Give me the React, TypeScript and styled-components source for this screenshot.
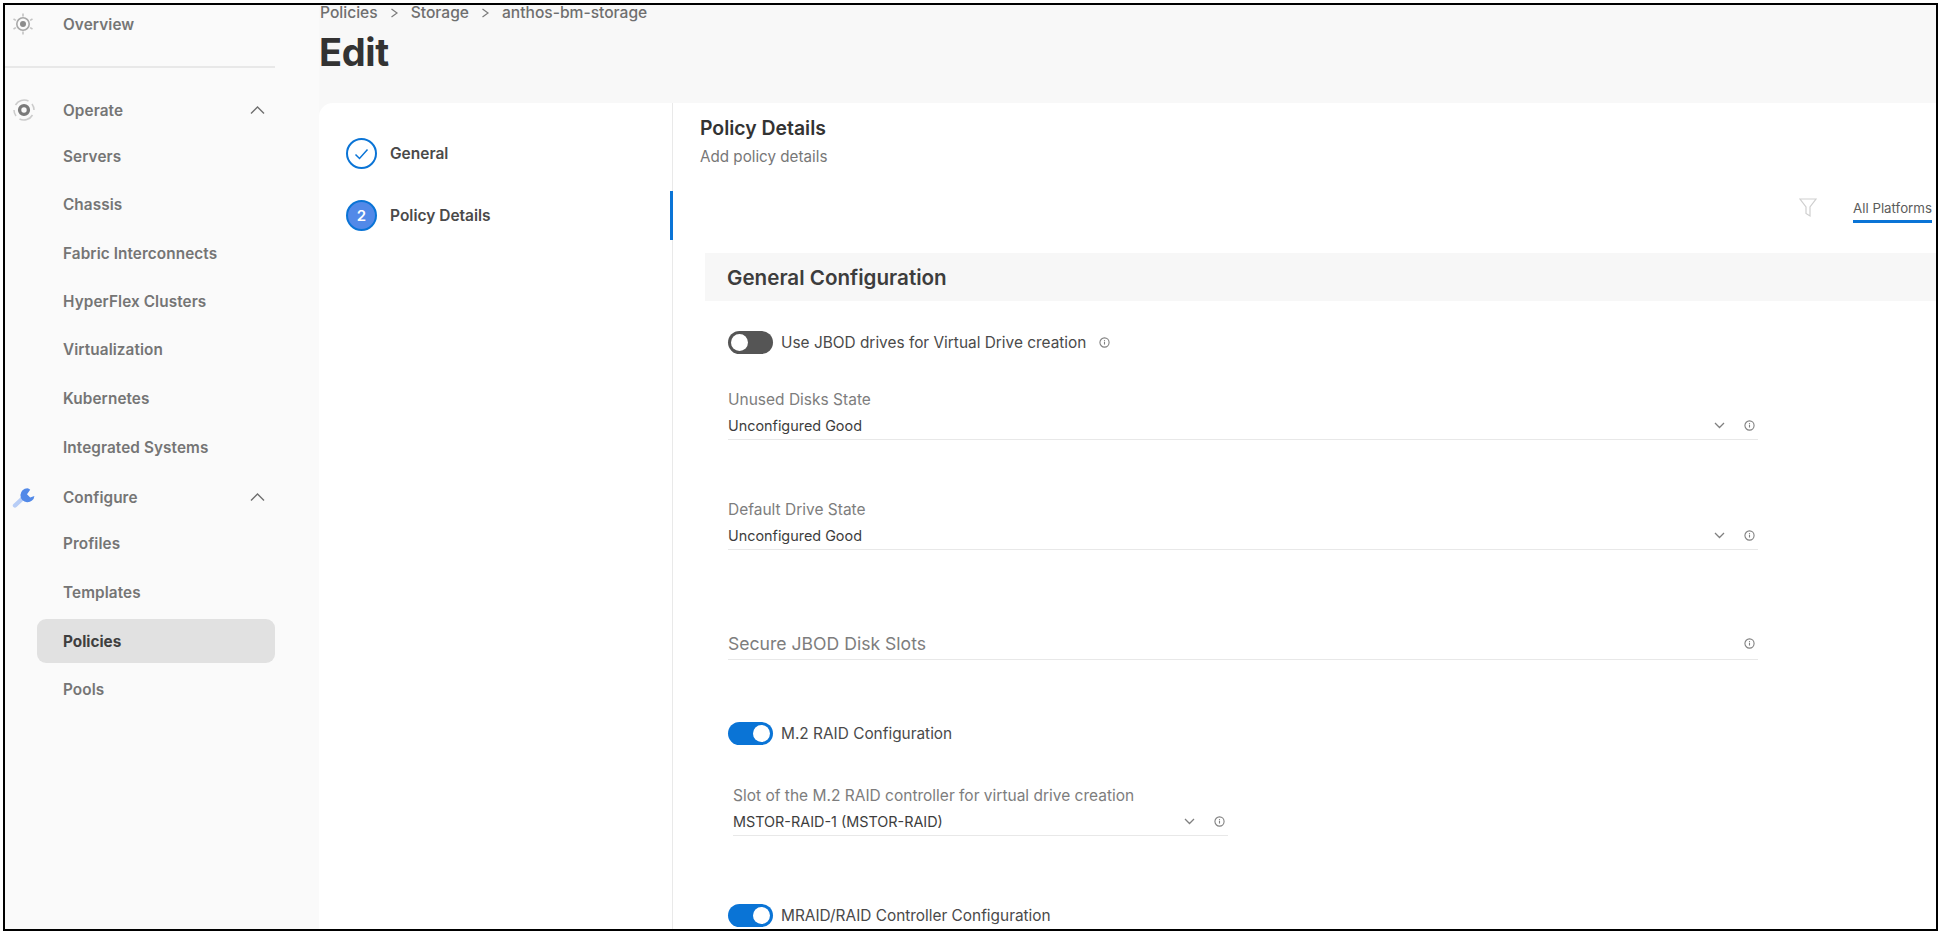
import React from "react";
import styled, { createGlobalStyle } from "styled-components";

const GlobalStyle = createGlobalStyle`
  html, body {
    margin: 0;
    padding: 0;
    background: #ffffff;
    font-family: Inter, "Liberation Sans", sans-serif;
  }
  * {
    box-sizing: border-box;
  }
`;

const Page = styled.div`
  width: 1941px;
  height: 935px;
  padding: 3px 3px 3px 3px;
  overflow: hidden;
`;

const Frame = styled.div`
  display: flex;
  width: 1935px;
  height: 928px;
  border: 2px solid #000000;
  overflow: hidden;
  background: #f8f8f8;
`;

const Sidebar = styled.nav`
  display: flex;
  flex-direction: column;
  flex: 0 0 314px;
  background: #fafafa;
`;

const NavRow = styled.div<{ $height: number; $nudge?: number }>`
  display: flex;
  align-items: center;
  flex: 0 0 ${(p) => p.$height}px;
  padding-left: 58px;
  padding-top: ${(p) => p.$nudge ?? 0}px;
  font-size: 15.3px;
  font-weight: 600;
  letter-spacing: 0.1px;
  color: #757575;
`;

const NavSection = styled(NavRow)`
  position: relative;
`;

const NavIcon = styled.span`
  position: absolute;
  left: 7px;
  top: 50%;
  transform: translateY(-50%);
  display: flex;
`;

const NavChevron = styled.span`
  position: absolute;
  left: 245px;
  top: 50%;
  transform: translateY(-50%);
  display: flex;
`;

const NavDivider = styled.div`
  flex: 0 0 2px;
  width: 270px;
  margin-bottom: 20px;
  background: #e8e8e8;
`;

const ActivePill = styled.div`
  display: flex;
  align-items: center;
  flex: 0 0 44px;
  width: 238px;
  margin: 2px 0 2px 32px;
  padding-left: 26px;
  border-radius: 9px;
  background: #e1e1e1;
  font-size: 15.3px;
  font-weight: 700;
  color: #3f3f3f;
`;

const Main = styled.main`
  display: flex;
  flex-direction: column;
  flex: 1;
  min-width: 0;
`;

const Crumbs = styled.div`
  display: flex;
  align-items: center;
  gap: 12px;
  height: 16px;
  padding-left: 1px;
  font-size: 15.6px;
  font-weight: 500;
  line-height: 16px;
  color: #6f6f6f;
`;

const CrumbSep = styled.span`
  display: flex;
  color: #7c7c7c;
`;

const PageTitle = styled.h1`
  height: 82px;
  margin: 0;
  padding: 9px 0 0 0;
  font-size: 38px;
  font-weight: 700;
  line-height: 44px;
  letter-spacing: -0.4px;
  color: #333333;
`;

const Card = styled.section`
  display: flex;
  flex: 1;
  min-height: 0;
  background: #ffffff;
  border-top-left-radius: 14px;
`;

const StepsPane = styled.div`
  position: relative;
  display: flex;
  flex-direction: column;
  gap: 31px;
  flex: 0 0 354px;
  padding: 35px 0 0 27px;
  border-right: 1px solid #e9e9e9;
`;

const Step = styled.div`
  display: flex;
  align-items: center;
  gap: 13px;
  height: 31px;
  font-size: 15.5px;
  font-weight: 600;
  color: #4a4a4a;
`;

const StepCircle = styled.span<{ $current?: boolean }>`
  display: flex;
  align-items: center;
  justify-content: center;
  width: 31px;
  height: 31px;
  border: 2px solid #0a74d6;
  border-radius: 50%;
  background: ${(p) => (p.$current ? "#5289e8" : "#ffffff")};
  color: #ffffff;
  font-size: 15px;
  font-weight: 600;
`;

const StepMarker = styled.span`
  position: absolute;
  right: -1px;
  top: 88px;
  width: 3px;
  height: 49px;
  background: #0a74d6;
`;

const DetailsPane = styled.div`
  display: flex;
  flex-direction: column;
  flex: 1;
  min-width: 0;
  padding-top: 13px;
`;

const PaneHeader = styled.div`
  padding-left: 27px;
`;

const PaneTitle = styled.div`
  font-size: 19.4px;
  font-weight: 600;
  line-height: 24px;
  color: #333333;
`;

const PaneSub = styled.div`
  margin-top: 7px;
  font-size: 15.2px;
  line-height: 20px;
  color: #777777;
`;

const FilterBar = styled.div`
  display: flex;
  align-items: flex-start;
  justify-content: flex-end;
  height: 86px;
  padding: 29px 4px 0 0;
`;

const FilterIcon = styled.span`
  display: flex;
  margin: 2px 36px 0 0;
`;

const PlatformTab = styled.div`
  height: 27px;
  border-bottom: 3px solid #0a74d6;
  font-size: 13.3px;
  line-height: 20px;
  padding-top: 2px;
  color: #5c5c5c;
`;

const Band = styled.div`
  display: flex;
  align-items: center;
  height: 48px;
  margin-left: 32px;
  padding-left: 22px;
  background: #f7f7f7;
  font-size: 20.6px;
  font-weight: 600;
  color: #3d3d3d;
`;

const Form = styled.div`
  display: flex;
  flex-direction: column;
  padding-left: 55px;
`;

const ToggleRow = styled.div<{ $top: number }>`
  display: flex;
  align-items: center;
  gap: 8px;
  height: 22px;
  margin-top: ${(p) => p.$top}px;
  font-size: 15.4px;
  color: #4a4a4a;
`;

const ToggleTrack = styled.span<{ $on?: boolean }>`
  display: flex;
  justify-content: ${(p) => (p.$on ? "flex-end" : "flex-start")};
  align-items: center;
  width: 45px;
  height: 23px;
  padding: 0 3px;
  border-radius: 12px;
  background: ${(p) => (p.$on ? "#0a74d6" : "#555555")};
`;

const ToggleKnob = styled.span`
  width: 17px;
  height: 17px;
  border-radius: 50%;
  background: #ffffff;
`;

const ToggleInfo = styled.span`
  display: flex;
  margin-left: 5px;
`;

const Field = styled.div<{ $top: number; $width: number; $indent?: number }>`
  width: ${(p) => p.$width}px;
  margin-top: ${(p) => p.$top}px;
  margin-left: ${(p) => p.$indent ?? 0}px;
  border-bottom: 1px solid #e8e8e8;
`;

const FieldLabel = styled.div`
  height: 25px;
  font-size: 15.5px;
  line-height: 24px;
  color: #7d7d7d;
`;

const FieldValue = styled.div`
  display: flex;
  align-items: center;
  height: 26px;
  padding-bottom: 1px;
  font-size: 14.4px;
  color: #3d3d3d;
`;

const PlaceholderValue = styled(FieldValue)`
  height: 29px;
  padding-bottom: 3px;
`;

const FieldText = styled.span`
  flex: 1;
`;

const FieldPlaceholder = styled.span`
  flex: 1;
  font-size: 17.6px;
  color: #7d7d7d;
`;

const FieldIcons = styled.span`
  display: flex;
  align-items: center;
  gap: 19px;
  padding-right: 3px;
`;

const InfoIcon = ({ size = 11 }: { size?: number }) => (
  <svg width={size} height={size} viewBox="0 0 12 12" fill="none">
    <circle cx="6" cy="6" r="5" stroke="#808080" strokeWidth="1.2" />
    <rect x="5.4" y="5.2" width="1.2" height="3" fill="#808080" />
    <rect x="5.4" y="3.4" width="1.2" height="1.1" fill="#808080" />
  </svg>
);

const ChevronDown = () => (
  <svg width="11" height="7" viewBox="0 0 11 7" fill="none">
    <path d="M1 1l4.5 4.5L10 1" stroke="#808080" strokeWidth="1.3" />
  </svg>
);

const ChevronUp = () => (
  <svg width="15" height="9" viewBox="0 0 15 9" fill="none">
    <path d="M1 8l6.5-6.5L14 8" stroke="#6e6e6e" strokeWidth="1.4" />
  </svg>
);

const CrumbChevron = () => (
  <svg width="9" height="10" viewBox="0 0 9 10" fill="none">
    <path d="M1.5 1l5.5 4-5.5 4" stroke="#7c7c7c" strokeWidth="1.2" />
  </svg>
);

const OverviewIcon = () => (
  <svg width="22" height="22" viewBox="0 0 22 22" fill="none">
    <circle cx="11" cy="11" r="6.2" stroke="#a8a8a8" strokeWidth="1.6" />
    <circle cx="11" cy="11" r="3" fill="#8c8c8c" />
    <path
      d="M11 0.5v3M11 18.5v3M1.5 6l2.4 1.4M18.1 14.6l2.4 1.4M1.5 16l2.4-1.4M18.1 7.4L20.5 6"
      stroke="#c4c4c4"
      strokeWidth="1.6"
    />
  </svg>
);

const OperateIcon = () => (
  <svg width="24" height="24" viewBox="0 0 24 24" fill="none">
    <path
      d="M3.5 7A10 10 0 0 1 16.5 3M20.5 17A10 10 0 0 1 7.5 21M2 12a10 10 0 0 0 2 6M22 12a10 10 0 0 0-2-6"
      stroke="#cccccc"
      strokeWidth="1.6"
    />
    <circle cx="12" cy="12" r="4.4" stroke="#7a7a7a" strokeWidth="3.4" />
  </svg>
);

const ConfigureIcon = () => (
  <svg width="24" height="24" viewBox="0 0 24 24" fill="none">
    <path d="M3 20.5l8-7.5" stroke="#b7cdf6" strokeWidth="4.4" strokeLinecap="round" />
    <path
      d="M15.4 3.3a7 7 0 1 0 7 7.6l-4.2 1.6-3.2-3.3 3.2-4.4a7 7 0 0 0-2.8-1.5z"
      fill="#5289e8"
    />
  </svg>
);

const FunnelIcon = () => (
  <svg width="18" height="20" viewBox="0 0 18 20" fill="none">
    <path d="M1 1h16l-6 8v9l-4-2.5V9L1 1z" stroke="#cfcfcf" strokeWidth="1.2" />
  </svg>
);

const CheckIcon = () => (
  <svg width="15" height="12" viewBox="0 0 15 12" fill="none">
    <path d="M1.5 6.5l4 4 8-9" stroke="#0a74d6" strokeWidth="1.5" />
  </svg>
);

const App = () => {
  return (
    <Page>
      <GlobalStyle />
      <Frame>
        <Sidebar>
          <NavSection $height={38}>
            <NavIcon>
              <OverviewIcon />
            </NavIcon>
            Overview
          </NavSection>
          <NavRow $height={23} />
          <NavDivider />
          <NavSection $height={44}>
            <NavIcon>
              <OperateIcon />
            </NavIcon>
            Operate
            <NavChevron>
              <ChevronUp />
            </NavChevron>
          </NavSection>
          <NavRow $height={48}>Servers</NavRow>
          <NavRow $height={49}>Chassis</NavRow>
          <NavRow $height={48}>Fabric Interconnects</NavRow>
          <NavRow $height={48}>HyperFlex Clusters</NavRow>
          <NavRow $height={49}>Virtualization</NavRow>
          <NavRow $height={48}>Kubernetes</NavRow>
          <NavRow $height={50}>Integrated Systems</NavRow>
          <NavSection $height={50}>
            <NavIcon>
              <ConfigureIcon />
            </NavIcon>
            Configure
            <NavChevron>
              <ChevronUp />
            </NavChevron>
          </NavSection>
          <NavRow $height={42}>Profiles</NavRow>
          <NavRow $height={53} $nudge={4}>
            Templates
          </NavRow>
          <ActivePill>Policies</ActivePill>
          <NavRow $height={48}>Pools</NavRow>
        </Sidebar>
        <Main>
          <Crumbs>
            <span>Policies</span>
            <CrumbSep>
              <CrumbChevron />
            </CrumbSep>
            <span>Storage</span>
            <CrumbSep>
              <CrumbChevron />
            </CrumbSep>
            <span>anthos-bm-storage</span>
          </Crumbs>
          <PageTitle>Edit</PageTitle>
          <Card>
            <StepsPane>
              <Step>
                <StepCircle>
                  <CheckIcon />
                </StepCircle>
                General
              </Step>
              <Step>
                <StepCircle $current>2</StepCircle>
                Policy Details
              </Step>
              <StepMarker />
            </StepsPane>
            <DetailsPane>
              <PaneHeader>
                <PaneTitle>Policy Details</PaneTitle>
                <PaneSub>Add policy details</PaneSub>
              </PaneHeader>
              <FilterBar>
                <FilterIcon>
                  <FunnelIcon />
                </FilterIcon>
                <PlatformTab>All Platforms</PlatformTab>
              </FilterBar>
              <Band>General Configuration</Band>
              <Form>
                <ToggleRow $top={30}>
                  <ToggleTrack>
                    <ToggleKnob />
                  </ToggleTrack>
                  Use JBOD drives for Virtual Drive creation
                  <ToggleInfo>
                    <InfoIcon />
                  </ToggleInfo>
                </ToggleRow>
                <Field $top={35} $width={1030}>
                  <FieldLabel>Unused Disks State</FieldLabel>
                  <FieldValue>
                    <FieldText>Unconfigured Good</FieldText>
                    <FieldIcons>
                      <ChevronDown />
                      <InfoIcon />
                    </FieldIcons>
                  </FieldValue>
                </Field>
                <Field $top={58} $width={1030}>
                  <FieldLabel>Default Drive State</FieldLabel>
                  <FieldValue>
                    <FieldText>Unconfigured Good</FieldText>
                    <FieldIcons>
                      <ChevronDown />
                      <InfoIcon />
                    </FieldIcons>
                  </FieldValue>
                </Field>
                <Field $top={80} $width={1030}>
                  <PlaceholderValue>
                    <FieldPlaceholder>Secure JBOD Disk Slots</FieldPlaceholder>
                    <FieldIcons>
                      <InfoIcon />
                    </FieldIcons>
                  </PlaceholderValue>
                </Field>
                <ToggleRow $top={62}>
                  <ToggleTrack $on>
                    <ToggleKnob />
                  </ToggleTrack>
                  M.2 RAID Configuration
                </ToggleRow>
                <Field $top={40} $width={495} $indent={5}>
                  <FieldLabel>Slot of the M.2 RAID controller for virtual drive creation</FieldLabel>
                  <FieldValue>
                    <FieldText>MSTOR-RAID-1 (MSTOR-RAID)</FieldText>
                    <FieldIcons>
                      <ChevronDown />
                      <InfoIcon />
                    </FieldIcons>
                  </FieldValue>
                </Field>
                <ToggleRow $top={68}>
                  <ToggleTrack $on>
                    <ToggleKnob />
                  </ToggleTrack>
                  MRAID/RAID Controller Configuration
                </ToggleRow>
              </Form>
            </DetailsPane>
          </Card>
        </Main>
      </Frame>
    </Page>
  );
};

export default App;
